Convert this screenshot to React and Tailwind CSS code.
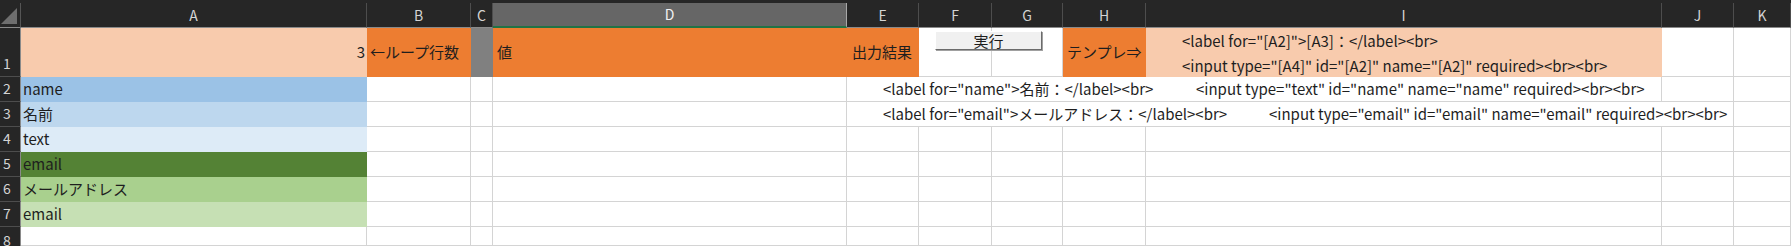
import React from 'react';

// 列幅（px）
const cols = [
  { key: 'A', w: 'w-[346px]' },
  { key: 'B', w: 'w-[104px]' },
  { key: 'C', w: 'w-[22px]' },
  { key: 'D', w: 'w-[354px]' },
  { key: 'E', w: 'w-[72px]' },
  { key: 'F', w: 'w-[73px]' },
  { key: 'G', w: 'w-[71px]' },
  { key: 'H', w: 'w-[83px]' },
  { key: 'I', w: 'w-[516px]' },
  { key: 'J', w: 'w-[72px]' },
  { key: 'K', w: 'w-[57px]' },
];

const font = { fontFamily: '"Noto Sans CJK JP", "Liberation Sans", sans-serif' };

const RowHead = ({ n, h }) => (
  <div className={`w-[21px] ${h} shrink-0 bg-[#262626] border-r border-r-[#8a8a8a] border-b border-b-[#4d4d4d] flex items-end pl-[3px] pb-[4px] text-[14px] leading-[18px] text-[#d4d4d4]`}>
    {n}
  </div>
);

// 普通のセル（白、グリッド線あり）
const Cell = ({ w, className = '', children }) => (
  <div className={`${w} shrink-0 h-full border-r border-b border-[#d4d4d4] bg-white flex items-center overflow-visible whitespace-nowrap ${className}`}>
    {children}
  </div>
);

// 塗りつぶしセル（グリッド線なし）
const Fill = ({ w, bg, className = '', children }) => (
  <div className={`${w} shrink-0 h-full ${bg} flex items-center whitespace-nowrap ${className}`}>
    {children}
  </div>
);

const aFills = [
  { n: 2, bg: 'bg-[#9bc2e6]', text: 'name' },
  { n: 3, bg: 'bg-[#bdd7ee]', text: '名前' },
  { n: 4, bg: 'bg-[#ddebf7]', text: 'text' },
  { n: 5, bg: 'bg-[#548235]', text: 'email' },
  { n: 6, bg: 'bg-[#a9d08e]', text: 'メールアドレス' },
  { n: 7, bg: 'bg-[#c6e0b4]', text: 'email' },
];

const WhiteRest = ({ from }) =>
  cols.slice(from).map((c) => <Cell key={c.key} w={c.w} />);

export default function App() {
  return (
    <div className="relative w-[1791px] h-[246px] overflow-hidden bg-white text-[15px] text-[#1e1e1e]" style={font}>
      {/* 列見出し */}
      <div className="flex h-[28px] bg-[#262626] pt-[3px]">
        <div className="w-[21px] shrink-0 h-[25px] border-r border-r-[#555] border-b border-b-[#8a8a8a] relative">
          <svg width="20" height="24" className="absolute left-0 top-0">
            <polygon points="1,21 17,21 17,5" fill="#6e6e6e" />
          </svg>
        </div>
        {cols.map((c) =>
          c.key === 'D' ? (
            <div key={c.key} className={`${c.w} shrink-0 h-[25px] bg-[#666666] border-r border-r-[#a8a8a8] border-b-2 border-b-[#217346] flex items-center justify-center text-[14px] text-[#f2f2f2]`}>
              {c.key}
            </div>
          ) : (
            <div key={c.key} className={`${c.w} shrink-0 h-[25px] border-r border-r-[#4d4d4d] border-b border-b-[#8a8a8a] flex items-center justify-center text-[14px] text-[#d4d4d4]`}>
              {c.key}
            </div>
          )
        )}
      </div>

      {/* 1行目 */}
      <div className="flex h-[49px]">
        <RowHead n="1" h="h-[49px]" />
        <Fill w="w-[346px]" bg="bg-[#f8cbad]" className="justify-end pr-[2px]">3</Fill>
        <Fill w="w-[104px]" bg="bg-[#ed7d31]" className="pl-[3px]">←ループ行数</Fill>
        <Fill w="w-[22px]" bg="bg-[#808080]" />
        <Fill w="w-[354px]" bg="bg-[#ed7d31]" className="pl-[4px]">値</Fill>
        <Fill w="w-[72px]" bg="bg-[#ed7d31]" className="pl-[5px]">出力結果</Fill>
        <Cell w="w-[73px]" />
        <Cell w="w-[71px]" />
        <Fill w="w-[83px]" bg="bg-[#ed7d31]" className="pl-[4px]">テンプレ⇒</Fill>
        <Fill w="w-[516px]" bg="bg-[#f8cbad]" className="flex-col !items-start justify-center pl-[36px] leading-[25px]">
          <span>{'<label for="[A2]">[A3]：</label><br>'}</span>
          <span>{'<input type="[A4]" id="[A2]" name="[A2]" required><br><br>'}</span>
        </Fill>
        <Cell w="w-[72px]" />
        <Cell w="w-[57px]" />
      </div>

      {/* 2〜7行目 */}
      {aFills.map((r) => (
        <div key={r.n} className="flex h-[25px]">
          <RowHead n={r.n} h="h-[25px]" />
          <Fill w="w-[346px]" bg={r.bg} className="pl-[2px]">{r.text}</Fill>
          <Cell w="w-[104px]" />
          <Cell w="w-[22px]" />
          <Cell w="w-[354px]" />
          {r.n === 2 ? (
            <>
              <Cell w="w-[815px]" className="pl-[36px]">
                <span className="w-[313px] shrink-0">{'<label for="name">名前：</label><br>'}</span>
                <span>{'<input type="text" id="name" name="name" required><br><br>'}</span>
              </Cell>
              <WhiteRest from={9} />
            </>
          ) : r.n === 3 ? (
            <>
              <Cell w="w-[887px]" className="pl-[36px]">
                <span className="w-[386px] shrink-0">{'<label for="email">メールアドレス：</label><br>'}</span>
                <span>{'<input type="email" id="email" name="email" required><br><br>'}</span>
              </Cell>
              <WhiteRest from={10} />
            </>
          ) : (
            <WhiteRest from={4} />
          )}
        </div>
      ))}

      {/* 8行目（画面下端で切れる） */}
      <div className="flex h-[19px]">
        <div className="w-[21px] h-[19px] shrink-0 bg-[#262626] border-r border-r-[#8a8a8a] flex items-start pl-[3px] pt-[7px] text-[14px] leading-[12px] text-[#d4d4d4]">
          8
        </div>
        <WhiteRest from={0} />
      </div>

      {/* 実行ボタン */}
      <button className="absolute left-[935px] top-[31px] w-[107px] h-[19px] bg-[#f0f0f0] border border-t-white border-l-white border-r-[#6b6b6b] border-b-[#6b6b6b] shadow-[1px_1px_0_#a0a0a0] flex items-center justify-center text-[15px] leading-none text-[#1e1e1e]">
        実行
      </button>
    </div>
  );
}
